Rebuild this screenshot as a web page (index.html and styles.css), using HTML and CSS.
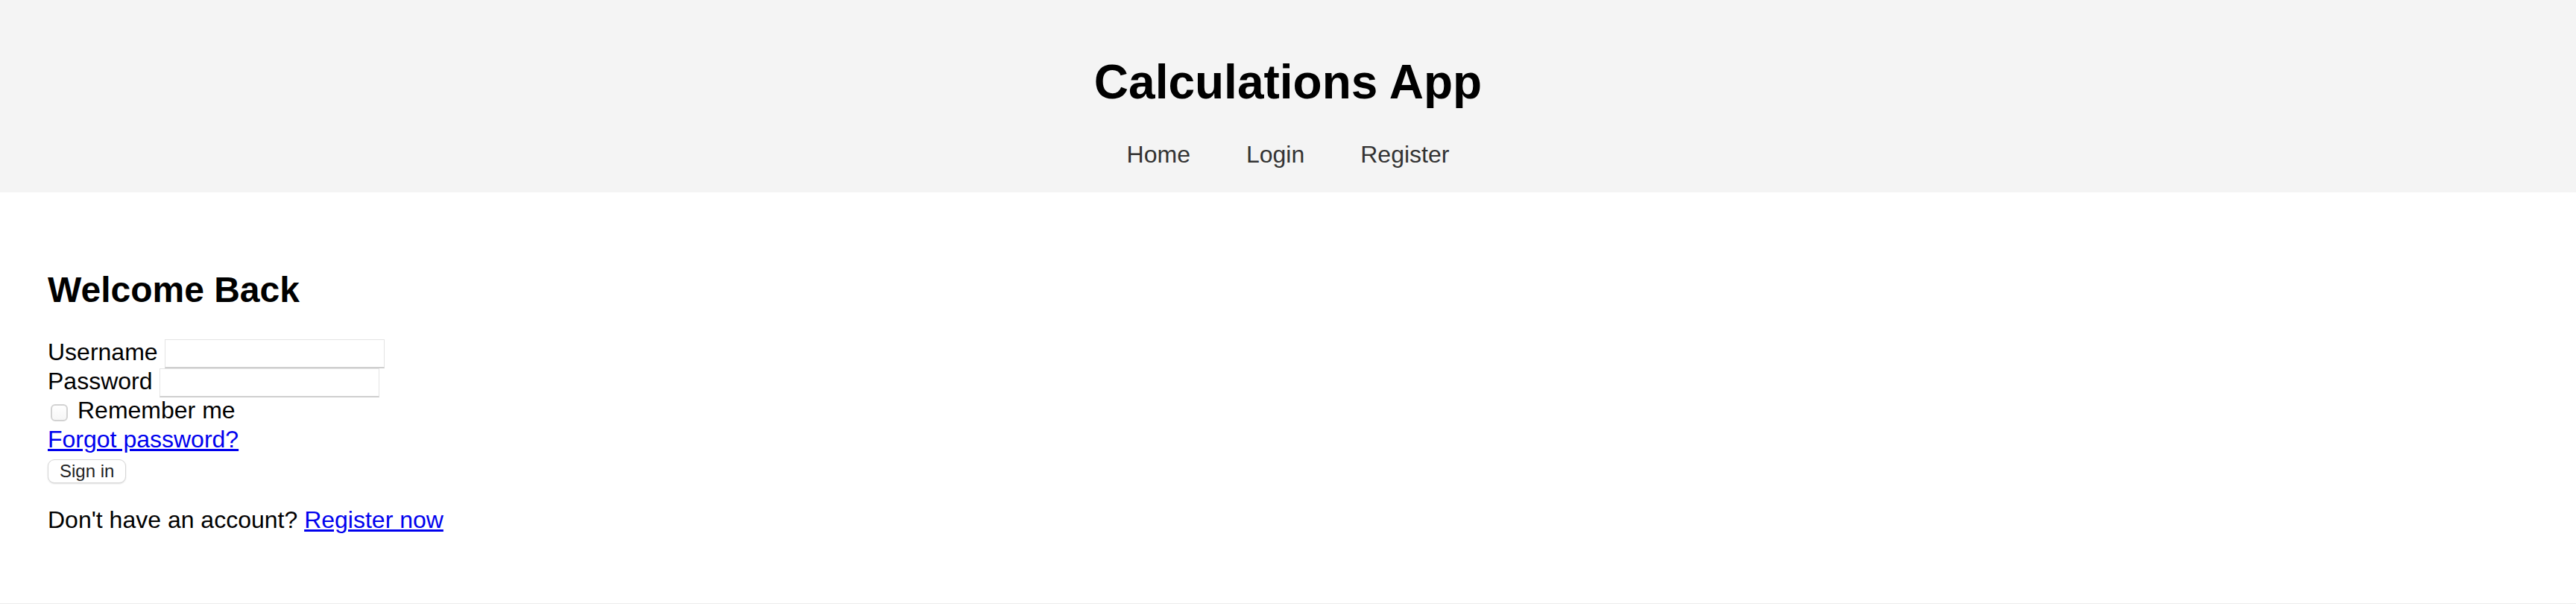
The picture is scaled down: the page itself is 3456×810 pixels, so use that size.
FILE: index.html
```html
<!DOCTYPE html>
<html lang="en">
<head>
<meta charset="utf-8">
<title>Calculations App - Login</title>
<link rel="stylesheet" href="styles.css">
</head>
<body>
<header class="site-header">
  <h1 class="site-title">Calculations App</h1>
  <nav class="site-nav">
    <a href="#">Home</a>
    <a href="#">Login</a>
    <a href="#">Register</a>
  </nav>
</header>
<main class="content">
  <h2 class="page-title">Welcome Back</h2>
  <form class="login-form">
    <div class="form-row">
      <label class="field-label" for="username">Username</label>
      <input class="text-input" type="text" id="username">
    </div>
    <div class="form-row">
      <label class="field-label" for="password">Password</label>
      <input class="text-input" type="password" id="password">
    </div>
    <div class="form-row check-row">
      <input class="check-input" type="checkbox" id="remember">
      <label class="field-label" for="remember">Remember me</label>
    </div>
    <div class="form-row">
      <a class="text-link" href="#">Forgot password?</a>
    </div>
    <div class="button-row">
      <button class="submit-btn" type="submit">Sign in</button>
    </div>
  </form>
  <p class="register-note">Don't have an account? <a class="text-link" href="#">Register now</a></p>
</main>
<footer class="site-footer"></footer>
</body>
</html>
```

FILE: styles.css
```css
html, body {
  margin: 0;
  padding: 0;
  background: #ffffff;
}

body {
  font-family: "Liberation Sans", Arial, Helvetica, sans-serif;
  color: #000;
}

.site-header {
  background: #f4f4f4;
  padding: 32px 32px 33px;
  text-align: center;
}

.site-title {
  font-size: 64px;
  line-height: 74px;
  font-weight: bold;
  margin: 41px 0 42px;
}

.site-nav {
  display: flex;
  justify-content: center;
  gap: 75px;
  font-size: 32px;
  line-height: 36px;
}

.site-nav a {
  color: #333;
  text-decoration: none;
}

.content {
  padding: 64px 64px 61px;
}

.page-title {
  font-size: 48px;
  line-height: 54px;
  font-weight: bold;
  margin: 40px 0 39px;
}

.login-form {
  font-size: 32px;
}

.form-row {
  display: flex;
  align-items: flex-start;
  gap: 9px;
  height: 39px;
}

.field-label {
  line-height: 35px;
}

.text-input {
  box-sizing: border-box;
  width: 295px;
  height: 39px;
  margin: 0;
  padding: 0 6px;
  font-family: inherit;
  font-size: 22px;
  background: #fff;
  border: 1px solid #e4e4e4;
  border-bottom: 2px solid #cfcfcf;
  border-radius: 0;
  outline: none;
}

.check-row {
  gap: 13px;
}

.check-input {
  appearance: none;
  -webkit-appearance: none;
  box-sizing: border-box;
  width: 23px;
  height: 23px;
  margin: 9px 0 0 4px;
  border: 2px solid #d2d2d2;
  border-radius: 6px;
  background: linear-gradient(#ffffff, #f6f6f6);
}

.text-link {
  color: #0000ee;
  text-decoration: underline;
  line-height: 35px;
}

.button-row {
  height: 36px;
}

.submit-btn {
  box-sizing: border-box;
  height: 32px;
  margin: 1px 0 0;
  padding: 0 15px;
  font-family: inherit;
  font-size: 24px;
  color: #222;
  background: #fff;
  border: 1px solid #d6d6d6;
  border-radius: 9px;
  box-shadow: 0 1px 2px rgba(0, 0, 0, 0.12);
}

.register-note {
  font-size: 32px;
  line-height: 37px;
  margin: 32px 0;
}

.site-footer {
  background: #f4f4f4;
  border-top: 2px solid #ececec;
  height: 40px;
}
```
